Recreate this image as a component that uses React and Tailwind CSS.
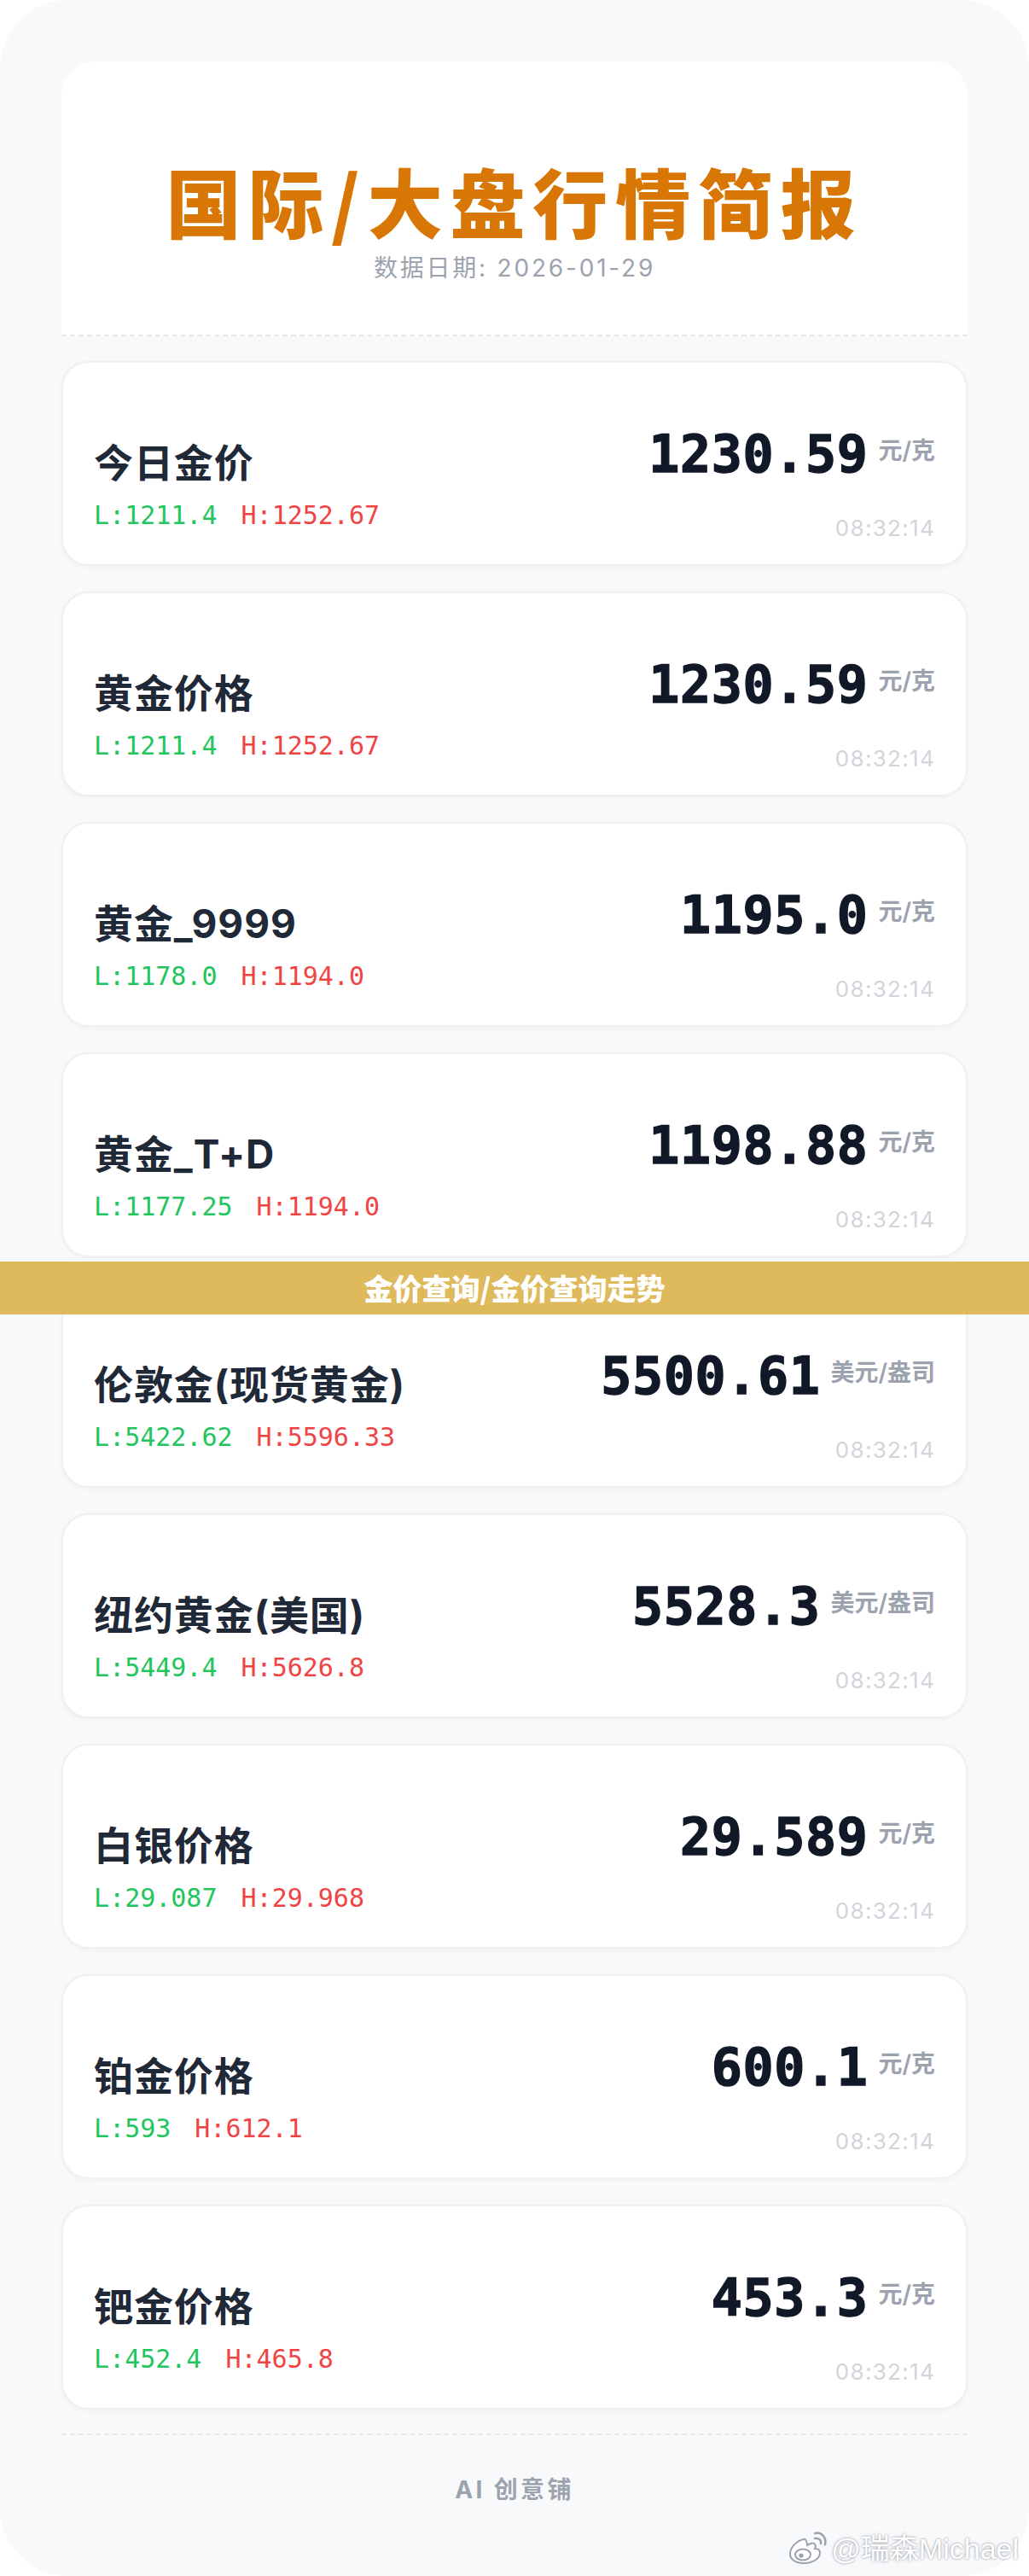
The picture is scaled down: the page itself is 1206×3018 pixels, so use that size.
import React from "react";

const items = [
  { name: "今日金价", price: "1230.59", unit: "元/克", low: "1211.4", high: "1252.67" },
  { name: "黄金价格", price: "1230.59", unit: "元/克", low: "1211.4", high: "1252.67" },
  { name: "黄金_9999", price: "1195.0", unit: "元/克", low: "1178.0", high: "1194.0" },
  { name: "黄金_T+D", price: "1198.88", unit: "元/克", low: "1177.25", high: "1194.0" },
  { name: "伦敦金(现货黄金)", price: "5500.61", unit: "美元/盎司", low: "5422.62", high: "5596.33" },
  { name: "纽约黄金(美国)", price: "5528.3", unit: "美元/盎司", low: "5449.4", high: "5626.8" },
  { name: "白银价格", price: "29.589", unit: "元/克", low: "29.087", high: "29.968" },
  { name: "铂金价格", price: "600.1", unit: "元/克", low: "593", high: "612.1" },
  { name: "钯金价格", price: "453.3", unit: "元/克", low: "452.4", high: "465.8" },
];

function PriceCard({ item }) {
  return (
    <div className="h-[240px] rounded-[32px] bg-white border-2 border-[#eef0f3] shadow-[0_2px_6px_rgba(15,23,42,0.035)] px-9 pt-[50px] flex items-center justify-between">
      <div>
        <div className="text-[46px] leading-[56px] font-bold tracking-[0.02em] text-[#1f2937]">
          {item.name}
        </div>
        <div className="mt-4 flex gap-7 font-['DejaVu_Sans_Mono',monospace] text-[30px] leading-9">
          <span className="text-[#22c55e]">L:{item.low}</span>
          <span className="text-[#ef4444]">H:{item.high}</span>
        </div>
      </div>
      <div className="flex flex-col items-end">
        <div className="flex items-start">
          <span className="font-['DejaVu_Sans_Mono',monospace] font-bold text-[60px] leading-[60px] tracking-[0.01em] text-[#111827] [-webkit-text-stroke:1.4px_#111827]">
            {item.price}
          </span>
          <span className="ml-3 mt-[7px] text-[28px] leading-[39px] font-semibold text-[#9ca3af]">
            {item.unit}
          </span>
        </div>
        <div className="mt-[41px] text-[26px] leading-8 tracking-[0.05em] text-[#d1d5db]">08:32:14</div>
      </div>
    </div>
  );
}

export default function App() {
  return (
    <div className="relative bg-white font-['Inter','Noto_Sans_CJK_SC',sans-serif]">
      <div className="h-[3018px] rounded-[80px] bg-[#f8f9fb] px-[72px] pt-[72px] flex flex-col">
        {/* header */}
        <div className="h-[322px] rounded-t-[40px] bg-white border-b-2 border-dashed border-[#e5e7eb] flex flex-col items-center pt-[118px]">
          <h1 className="font-['Noto_Sans_CJK_SC',sans-serif] font-black text-[88px] leading-none tracking-[0.1em] text-[#d97706]">
            国际/大盘行情简报
          </h1>
          <div className="mt-[22px] text-[28px] leading-7 tracking-[0.1em] text-[#9ca3af]">
            数据日期: 2026-01-29
          </div>
        </div>

        {/* list */}
        <div className="pt-[29px] pb-[28px] flex flex-col gap-[30px]">
          {items.map((item, i) => (
            <PriceCard key={i} item={item} />
          ))}
        </div>

        {/* footer */}
        <div className="border-t-2 border-dashed border-[#e5e7eb] pt-[46px] flex justify-center">
          <div className="text-[28px] leading-9 font-bold tracking-[0.12em] text-[#9ca3af]">AI 创意铺</div>
        </div>
      </div>

      {/* overlay banner */}
      <div className="absolute left-0 right-0 top-[1478px] h-[62px] bg-[#dcb24a]/90 flex items-center justify-center">
        <span className="font-['Noto_Sans_CJK_SC',sans-serif] font-black text-[34px] leading-none text-white">
          金价查询/金价查询走势
        </span>
      </div>

      {/* watermark */}
      <div className="absolute right-[12px] top-[2966px] flex items-center gap-1">
        <svg width="46" height="40" viewBox="0 0 46 40" fill="none">
          <path
            d="M18 9c-7 1-16 9-16 17 0 7 7 11 16 11 11 0 19-6 19-12 0-4-3-5-6-5 2-4 0-8-5-6l-4 2c0-4-2-8-4-7z"
            fill="#fff"
            stroke="#9ca3af"
            strokeWidth="2"
          />
          <ellipse cx="17" cy="27" rx="9" ry="6.5" fill="#fff" stroke="#9ca3af" strokeWidth="2" />
          <circle cx="15" cy="28" r="2.6" fill="#9ca3af" />
          <path d="M31 8c4-1 8 2 7 6" stroke="#9ca3af" strokeWidth="2.5" strokeLinecap="round" />
          <path d="M31 2c8-2 14 5 12 13" stroke="#9ca3af" strokeWidth="2.5" strokeLinecap="round" />
        </svg>
        <span className="font-['Liberation_Sans','Noto_Sans_CJK_SC',sans-serif] text-[34px] leading-none text-white [text-shadow:0_0_3px_rgba(75,85,99,0.7)]">
          @瑞森Michael
        </span>
      </div>
    </div>
  );
}
